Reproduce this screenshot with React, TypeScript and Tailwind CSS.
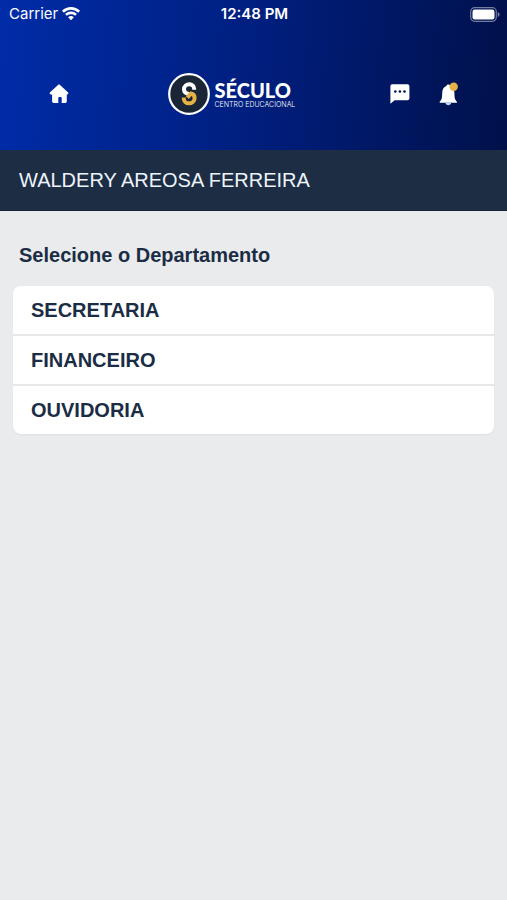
const departments = ["SECRETARIA", "FINANCEIRO", "OUVIDORIA"];

function WifiIcon() {
  return (
    <svg viewBox="0 0 18 14" className="h-[14px] w-[18px]" fill="currentColor" aria-hidden="true">
      <path d="M9 0C5.6 0 2.500 1.300.2 3.500a.4.4 0 0 0 0 .6l1.300 1.300c.2.2.4.2.6 0A10 10 0 0 1 9 2.700a10 10 0 0 1 6.900 2.700c.2.2.4.2.6 0l1.300-1.300a.4.4 0 0 0 0-.6A12.700 12.700 0 0 0 9 0Z" />
      <path d="M9 4.500a8.300 8.300 0 0 0-5.700 2.200.4.4 0 0 0 0 .6l1.300 1.300c.2.2.4.2.6 0A5.600 5.600 0 0 1 9 7.200c1.400 0 2.800.5 3.800 1.400.2.2.4.2.6 0l1.300-1.300a.4.4 0 0 0 0-.6A8.300 8.300 0 0 0 9 4.500Z" />
      <path d="M9 9a3.900 3.900 0 0 0-2.600 1 .4.4 0 0 0 0 .6l2.300 2.300c.2.2.4.2.6 0l2.300-2.300a.4.4 0 0 0 0-.6A3.900 3.900 0 0 0 9 9Z" />
    </svg>
  );
}

function BatteryIcon() {
  return (
    <svg viewBox="0 0 30 15" className="h-[15px] w-[30px]" aria-hidden="true">
      <rect x="0.700" y="0.700" width="25.600" height="13.600" rx="4" fill="none" stroke="#fff" strokeOpacity="0.45" strokeWidth="1.200" />
      <rect x="2.500" y="2.500" width="22" height="10" rx="2.200" fill="#fff" />
      <path d="M27.800 5v5c1-.4 1.700-1.400 1.700-2.500S28.800 5.400 27.800 5Z" fill="#fff" fillOpacity="0.5" />
    </svg>
  );
}

function HomeIcon() {
  return (
    <svg viewBox="0 0 22 22" className="h-[22px] w-[22px]" fill="currentColor" aria-hidden="true">
      <path d="M10 1.900c.6-.5 1.400-.5 2 0l7.900 7.300c.9.900.4 2.300-.9 2.300h-.2v6.700c0 1.100-.7 1.900-1.900 1.900h-3.200v-4.800c0-.8-.5-1.300-1.300-1.300h-.8c-.8 0-1.300.5-1.300 1.300v4.800H6.100c-1.200 0-2-.8-2-1.900v-6.700H3c-1.300 0-1.800-1.400-.9-2.300Z" />
    </svg>
  );
}

function ChatIcon() {
  return (
    <svg viewBox="0 0 22 22" className="h-[22px] w-[22px]" aria-hidden="true">
      <path d="M3.400 1.200h15c1.200 0 2 .8 2 2v12c0 1.200-.8 2-2 2H5.600L1.400 20.800V3.200c0-1.200.8-2 2-2Z" fill="#fff" />
      <circle cx="6.300" cy="8.500" r="1.300" fill="#00134f" />
      <circle cx="10.900" cy="8.500" r="1.300" fill="#00134f" />
      <circle cx="15.500" cy="8.500" r="1.300" fill="#00134f" />
    </svg>
  );
}

function BellIcon() {
  return (
    <svg viewBox="0 0 22 24" className="h-6 w-[22px]" aria-hidden="true">
      <path d="M11.300 2.400c-1 0-1.800.7-1.900 1.700-2.600.9-4 3-4.100 6l-.3 5c-.2 2.200-1.100 3.500-2.300 4.700v1h17.200v-1c-1.200-1.200-2.100-2.500-2.300-4.700l-.3-5c-.1-3-1.500-5.100-4.100-6-.1-1-.9-1.700-1.900-1.700Z" fill="#fff" />
      <path d="M8.500 21.100h5.600c-.2 1.300-1.300 2.200-2.800 2.200s-2.600-.9-2.800-2.200Z" fill="#c3d5f3" />
      <circle cx="16.700" cy="4.700" r="4.200" fill="#e5b245" />
    </svg>
  );
}

function Logo() {
  return (
    <div className="flex items-center gap-[5px]">
      <svg viewBox="0 0 42 42" className="h-[42px] w-[42px]" aria-hidden="true">
        <circle cx="21" cy="21" r="19.800" fill="#1a2535" stroke="#fff" strokeWidth="2.200" />
        <path d="M26.200 16.800v-.8c0-2.800-2-4.800-4.900-4.800s-5.300 2.100-5.300 5c0 3 2.200 4.500 5.500 4.700" fill="none" stroke="#fff" strokeWidth="4" />
        <path d="M15.800 24.600v.8c0 2.900 2.200 4.900 5.100 4.900s5.700-2 5.700-5.100c0-2.700-1.500-4.300-3.700-4.600l-3.600 4" fill="none" stroke="#e5b245" strokeWidth="4" />
      </svg>
      <div className="w-[77px] whitespace-nowrap text-white">
        <p className="font-['Lato',sans-serif] text-[20px] leading-[22px] font-black">SÉCULO</p>
        <p className="font-['Inter',sans-serif] text-[7px] leading-2 font-light">CENTRO EDUCACIONAL</p>
      </div>
    </div>
  );
}

function StatusBar() {
  return (
    <div className="grid h-7 grid-cols-3 items-center pr-[7px] pl-[9px] font-['Inter',sans-serif] text-[15px] leading-5 text-white">
      <div className="flex items-center gap-1">
        <span>Carrier</span>
        <WifiIcon />
      </div>
      <span className="text-center font-semibold">12:48 PM</span>
      <div className="flex justify-end">
        <BatteryIcon />
      </div>
    </div>
  );
}

export default function App() {
  return (
    <div className="min-h-screen bg-[#e9ebec] font-['Liberation_Sans',Arial,sans-serif] text-[#1b2d45]">
      <header className="bg-linear-[95deg,#002ca8,#001f80_48%,#00104a]">
        <StatusBar />
        <nav className="flex h-[122px] items-center justify-between px-12 pt-5 pb-2.5 text-white">
          <button type="button" aria-label="Início">
            <HomeIcon />
          </button>
          <Logo />
          <div className="flex items-center gap-[26px]">
            <button type="button" aria-label="Mensagens">
              <ChatIcon />
            </button>
            <button type="button" aria-label="Notificações">
              <BellIcon />
            </button>
          </div>
        </nav>
      </header>

      <div className="border-b border-[#1a2440] bg-[#1c2d44] px-[19px] py-4 text-[20px] leading-7 text-[#eef4fa]">
        WALDERY AREOSA FERREIRA
      </div>

      <main className="px-[13px] pt-8">
        <h1 className="px-1.5 text-[20px] leading-6 font-bold">Selecione o Departamento</h1>
        <ul className="mt-[19px] divide-y-2 divide-[#e6e7e8] overflow-hidden rounded-lg bg-white shadow-xs">
          {departments.map((name) => (
            <li key={name}>
              <button
                type="button"
                className="block w-full px-[18px] py-3 text-left text-[20px] leading-6 font-bold"
              >
                {name}
              </button>
            </li>
          ))}
        </ul>
      </main>
    </div>
  );
}
